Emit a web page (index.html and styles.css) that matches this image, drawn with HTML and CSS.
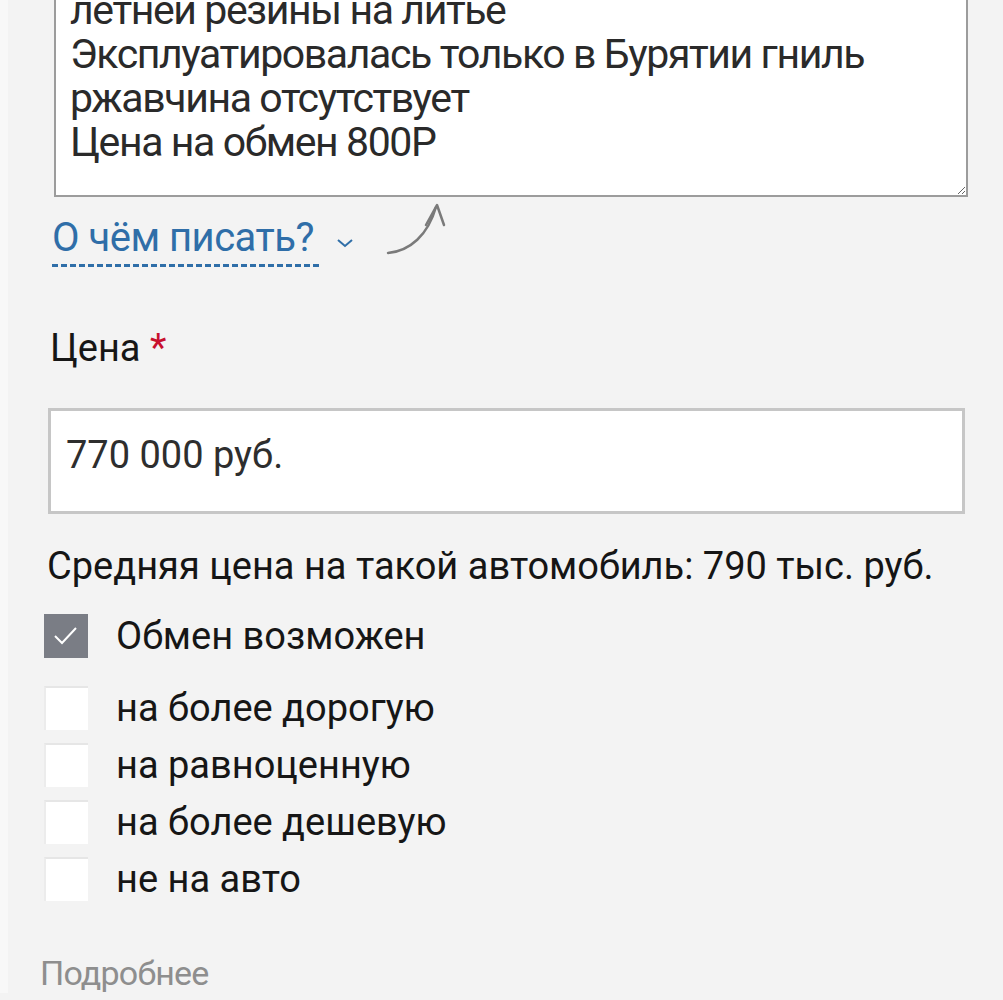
FILE: index.html
```html
<!DOCTYPE html>
<html lang="ru">
<head>
    <meta charset="UTF-8">
    <meta name="viewport" content="width=device-width, initial-scale=1.0">
    <title>Подать объявление</title>
    <link rel="stylesheet" href="styles.css">
</head>
<body>
    <div class="form">
        <textarea class="description" rows="4">летней резины на литье
Эксплуатировалась только в Бурятии гниль
ржавчина отсутствует
Цена на обмен 800Р</textarea>

        <div class="hint">
            <span class="hint-link">О чём писать?</span>
            <svg class="chevron" width="18" height="12" viewBox="0 0 18 12">
                <path d="M2 3 L9 9 L16 3" fill="none" stroke="#2f6ea8" stroke-width="2"/>
            </svg>
            <svg class="arrow" width="70" height="62" viewBox="0 0 70 62">
                <path d="M4 54 C 26 52, 44 36, 52 8" fill="none" stroke="#7a7a7a" stroke-width="2.5" stroke-linecap="round"/>
                <path d="M42 26 L53 6 L60 26" fill="none" stroke="#7a7a7a" stroke-width="2.5" stroke-linecap="round" stroke-linejoin="round"/>
            </svg>
        </div>

        <label class="field-label">Цена <span class="required">*</span></label>
        <input class="price" type="text" value="770 000 руб.">

        <p class="avg-price">Средняя цена на такой автомобиль: 790 тыс. руб.</p>

        <div class="check-row check-main">
            <span class="box checked">
                <svg width="44" height="44" viewBox="0 0 44 44">
                    <path d="M11 22 L18 29 L32 14" fill="none" stroke="#ffffff" stroke-width="2"/>
                </svg>
            </span>
            <span class="check-text">Обмен возможен</span>
        </div>
        <div class="check-row">
            <span class="box"></span>
            <span class="check-text">на более дорогую</span>
        </div>
        <div class="check-row">
            <span class="box"></span>
            <span class="check-text">на равноценную</span>
        </div>
        <div class="check-row">
            <span class="box"></span>
            <span class="check-text">на более дешевую</span>
        </div>
        <div class="check-row">
            <span class="box"></span>
            <span class="check-text">не на авто</span>
        </div>

        <div class="more">Подробнее</div>
    </div>
</body>
</html>
```

FILE: styles.css
```css
body {
    margin: 0;
    padding: 0;
    background: #f3f3f3;
    font-family: Roboto, "Noto Sans", Arial, sans-serif;
    color: #1c1c1c;
    overflow: hidden;
}

.form {
    min-height: 100vh;
    padding: 0 30px 0 46px;
    border-left: 8px solid #f8f8f8;
}

.description {
    display: block;
    box-sizing: border-box;
    margin: -24px 0 0 0;
    width: 914px;
    height: 221px;
    padding: 10px 14px 28px 14px;
    border: 2px solid #9c9c9c;
    border-radius: 0;
    background: #fff;
    font-family: Roboto, "Noto Sans", Arial, sans-serif;
    font-size: 41px;
    line-height: 44px;
    letter-spacing: -1.4px;
    color: #2a2a2a;
    resize: vertical;
    overflow: hidden;
}

.hint {
    display: flex;
    align-items: center;
    height: 60px;
    margin-top: 14px;
    margin-left: -2px;
}

.hint-link {
    font-size: 40px;
    line-height: 46px;
    color: #2f6ea8;
    padding-bottom: 6px;
    background-image: repeating-linear-gradient(90deg, #2f6ea8 0 6px, transparent 6px 9px);
    background-size: 100% 3px;
    background-position: 0 100%;
    background-repeat: no-repeat;
    padding-right: 8px;
    letter-spacing: -0.5px;
}

.chevron {
    margin-left: 14px;
    margin-top: 4px;
}

.arrow {
    margin-left: 30px;
    margin-top: -22px;
}

.field-label {
    display: block;
    margin-top: 55px;
    margin-left: -4px;
    font-size: 38px;
    line-height: 44px;
    color: #161616;
}

.required {
    color: #c8102e;
}

.price {
    display: block;
    box-sizing: border-box;
    margin: 38px 0 0 -6px;
    width: 917px;
    height: 106px;
    padding: 0 15px 12px 15px;
    border: 3px solid #c6c6c6;
    border-radius: 0;
    background: #fff;
    font-family: Roboto, "Noto Sans", Arial, sans-serif;
    font-size: 38px;
    color: #2e2e2e;
    outline: none;
}

.avg-price {
    margin: 30px 0 0 -7px;
    font-size: 38px;
    line-height: 44px;
    color: #151515;
}

.check-row {
    display: flex;
    align-items: center;
    height: 44px;
    margin-top: 13px;
    margin-left: -10px;
}

.check-main {
    margin-top: 26px;
    margin-bottom: 28px;
}

.box {
    width: 44px;
    height: 44px;
    flex: none;
    background: #fff;
    border-top: 2px solid #e6e6e6;
    border-left: 2px solid #ececec;
    box-sizing: border-box;
}

.box.checked {
    background: #7a7d85;
    border: none;
}

.check-text {
    margin-left: 28px;
    font-size: 38px;
    line-height: 44px;
    color: #161616;
}

.more {
    margin-top: 52px;
    margin-left: -14px;
    font-size: 34px;
    line-height: 40px;
    color: #8e8e8e;
    letter-spacing: -0.8px;
}
```
